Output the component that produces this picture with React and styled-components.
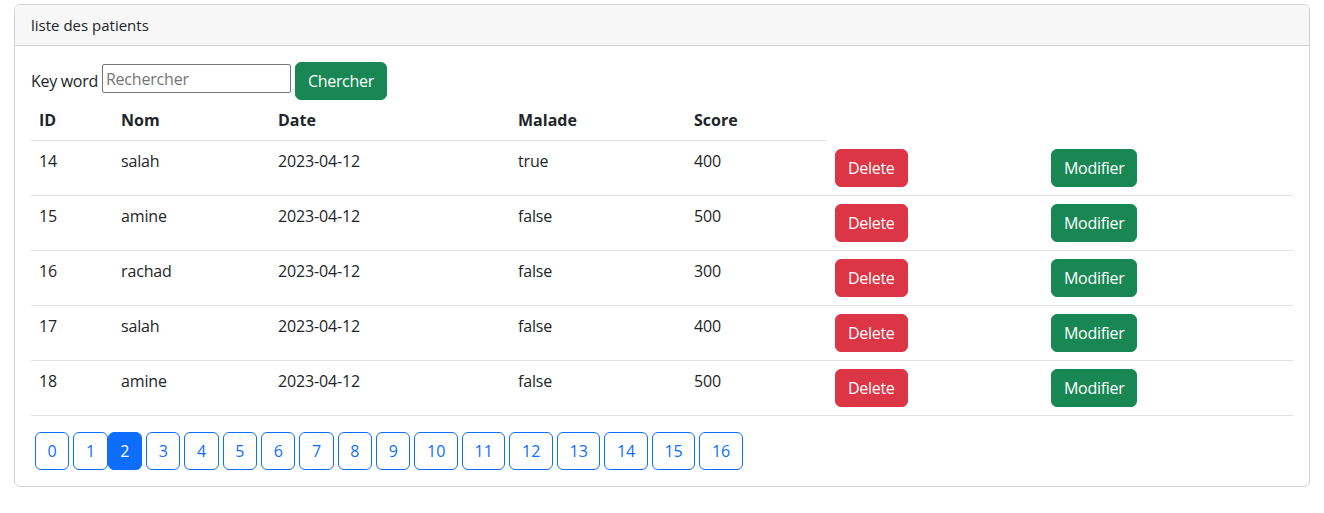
import React from "react";
import styled, { createGlobalStyle, css } from "styled-components";

const Global = createGlobalStyle`
  * { box-sizing: border-box; }
  body {
    margin: 0;
    font-family: "Open Sans", "Noto Sans", sans-serif;
    font-size: 16px;
    line-height: 24px;
    color: #212529;
    background: #fff;
  }
`;

const Page = styled.div`
  padding: 4px 14px;
`;

const Card = styled.section`
  border: 1px solid #d3d3d3;
  border-radius: 6px;
  background: #fff;
  overflow: hidden;
`;

const CardHeader = styled.header`
  padding: 8px 16px;
  background: #f7f7f7;
  border-bottom: 1px solid #d3d3d3;
  font-size: 15px;
`;

const CardBody = styled.div`
  padding: 16px;
`;

const SearchForm = styled.form`
  display: flex;
  align-items: baseline;
  gap: 4px;
`;

const Label = styled.label`
  font-size: 16px;
  letter-spacing: -0.3px;
`;

const Input = styled.input`
  align-self: flex-start;
  margin-top: 2px;
  width: 189px;
  height: 29px;
  padding: 1px 3px;
  border: 1px solid #767676;
  border-radius: 2px;
  font: inherit;
  font-size: 16px;
  letter-spacing: -0.2px;
  color: #212529;
  &::placeholder { color: #757575; }
`;

const variants = {
  success: css`
    background: #198754;
    border-color: #198754;
    color: #fff;
  `,
  danger: css`
    background: #dc3545;
    border-color: #dc3545;
    color: #fff;
  `,
  primary: css`
    background: #0d6efd;
    border-color: #0d6efd;
    color: #fff;
  `,
  outline: css`
    background: #fff;
    border-color: #0d6efd;
    color: #0d6efd;
  `,
};

const Button = styled.button`
  display: inline-block;
  padding: 6px ${(p) => (p.$compact ? 11.6 : 12)}px;
  border: 1px solid transparent;
  border-radius: 6px;
  font: inherit;
  font-size: 16px;
  line-height: 24px;
  letter-spacing: ${(p) => (p.$compact ? 0 : -0.3)}px;
  cursor: pointer;
  ${(p) => variants[p.$variant]}
`;

const Table = styled.table`
  width: 100%;
  border-collapse: collapse;
  table-layout: fixed;
  vertical-align: top;
  margin-bottom: 16px;
`;

const Col = styled.col`
  width: ${(p) => p.$w}px;
`;

const Th = styled.th`
  padding: 8px;
  text-align: left;
  font-weight: 700;
  border-bottom: 1px solid #dee2e6;
`;

const Td = styled.td`
  padding: 8px;
  text-align: left;
  border-bottom: 1px solid #dee2e6;
  vertical-align: top;
  letter-spacing: -0.15px;
`;

const Pager = styled.ul`
  display: flex;
  list-style: none;
  margin: 0;
  padding: 0;
`;

const PageItem = styled.li`
  margin-left: ${(p) => (p.$active ? 0 : 4)}px;
`;

const patients = [
  { id: 14, nom: "salah", date: "2023-04-12", malade: "true", score: 400 },
  { id: 15, nom: "amine", date: "2023-04-12", malade: "false", score: 500 },
  { id: 16, nom: "rachad", date: "2023-04-12", malade: "false", score: 300 },
  { id: 17, nom: "salah", date: "2023-04-12", malade: "false", score: 400 },
  { id: 18, nom: "amine", date: "2023-04-12", malade: "false", score: 500 },
];

const colWidths = [82, 157, 240, 176, 141, 216, 250];
const pages = Array.from({ length: 17 }, (_, i) => i);
const current = 2;

export default function App() {
  return (
    <Page>
      <Global />
      <Card>
        <CardHeader>liste des patients</CardHeader>
        <CardBody>
          <SearchForm onSubmit={(e) => e.preventDefault()}>
            <Label>Key word</Label>
            <Input placeholder="Rechercher" />
            <Button $variant="success" type="submit">Chercher</Button>
          </SearchForm>
          <Table>
            <colgroup>
              {colWidths.map((w, i) => (
                <Col key={i} $w={w} />
              ))}
            </colgroup>
            <thead>
              <tr>
                <Th>ID</Th>
                <Th>Nom</Th>
                <Th>Date</Th>
                <Th>Malade</Th>
                <Th>Score</Th>
              </tr>
            </thead>
            <tbody>
              {patients.map((p) => (
                <tr key={p.id}>
                  <Td>{p.id}</Td>
                  <Td>{p.nom}</Td>
                  <Td>{p.date}</Td>
                  <Td>{p.malade}</Td>
                  <Td>{p.score}</Td>
                  <Td>
                    <Button $variant="danger">Delete</Button>
                  </Td>
                  <Td>
                    <Button $variant="success">Modifier</Button>
                  </Td>
                </tr>
              ))}
            </tbody>
          </Table>
          <Pager>
            {pages.map((n) => (
              <PageItem key={n} $active={n === current}>
                <Button $compact $variant={n === current ? "primary" : "outline"}>
                  {n}
                </Button>
              </PageItem>
            ))}
          </Pager>
        </CardBody>
      </Card>
    </Page>
  );
}
